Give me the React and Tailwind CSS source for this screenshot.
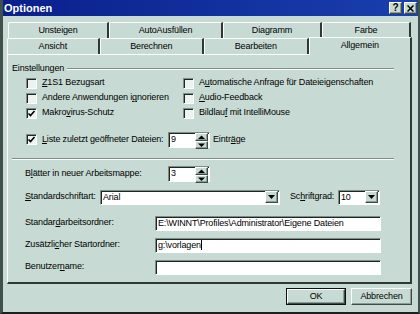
import React from 'react';

const face = 'bg-[#c8dad4]';
const raised = 'border border-t-white border-l-white border-r-[#3e4a47] border-b-[#3e4a47] shadow-[inset_-1px_-1px_0_#8a9a96]';
const sunken = 'border border-t-[#7d8d89] border-l-[#7d8d89] border-r-white border-b-white shadow-[inset_1px_1px_0_#1e2624]';

function U({ children }) {
  return <span className="underline underline-offset-1">{children}</span>;
}

function Check({ checked, children }) {
  return (
    <div className="flex items-center gap-[5px] h-[15px] whitespace-nowrap">
      <div className={`w-[11px] h-[11px] shrink-0 bg-[#eef3f1] ${sunken} flex items-center justify-center`}>
        {checked && (
          <svg width="9" height="9" viewBox="0 0 9 9">
            <path d="M1.5 4.5 L3.5 6.5 L7.5 2" stroke="#000" strokeWidth="1.6" fill="none" />
          </svg>
        )}
      </div>
      <span>{children}</span>
    </div>
  );
}

function Spin({ value }) {
  return (
    <div className={`w-[42px] h-[16px] shrink-0 bg-white ${sunken} flex items-center`}>
      <span className="flex-1 pl-[2px] leading-none">{value}</span>
      <div className="w-[13px] h-[14px] flex flex-col mr-[1px]">
        {['M1 5 L4.5 1.5 L8 5 Z', 'M1 1.5 L4.5 5 L8 1.5 Z'].map((d) => (
          <div key={d} className={`flex-1 ${face} ${raised} flex items-center justify-center`}>
            <svg width="9" height="6" viewBox="0 0 9 6"><path d={d} fill="#000" /></svg>
          </div>
        ))}
      </div>
    </div>
  );
}

function Combo({ value, w }) {
  return (
    <div className={`${w} h-[15px] shrink-0 bg-white ${sunken} flex items-center`}>
      <span className="flex-1 pl-[2px] leading-none">{value}</span>
      <div className={`w-[13px] h-[12px] mr-[1px] ${face} ${raised} flex items-center justify-center`}>
        <svg width="7" height="4" viewBox="0 0 7 4"><path d="M0 0 L7 0 L3.5 4 Z" fill="#000" /></svg>
      </div>
    </div>
  );
}

function Field({ value, cursor }) {
  return (
    <div className={`w-[226px] h-[15px] shrink-0 bg-white ${sunken} flex items-center pl-[2px]`}>
      <span className="leading-none">{value}</span>
      {cursor && <span className="w-px h-[10px] bg-black" />}
    </div>
  );
}

const row1 = [['Unsteigen', 'w-[101px]'], ['AutoAusfüllen', 'w-[114px]'], ['Diagramm', 'w-[99px]'], ['Farbe', 'w-[89px]']];
const row2 = [['Ansicht', 'w-[93px]'], ['Berechnen', 'w-[105px]'], ['Bearbeiten', 'w-[105px]']];

export default function App() {
  return (
    <div
      className={`w-[420px] h-[314px] ${face} border-l-[3px] border-l-[#40504c] border-b-[2px] border-b-[#1a2220] border-r-[2px] border-r-[#40504c] flex flex-col text-[9px] tracking-[-0.15px] text-black overflow-hidden whitespace-nowrap`}
      style={{ fontFamily: '"Liberation Sans", Arial, sans-serif' }}
    >
      <div className="h-[16px] shrink-0 bg-gradient-to-r from-[#0a1f8c] to-[#1a3fae] flex items-center justify-between pl-[1px] pr-[1px]">
        <span className="text-white font-bold text-[11px] tracking-normal">Optionen</span>
        <div className="flex gap-[2px]">
          <div className={`w-[13px] h-[12px] ${face} ${raised} flex items-center justify-center font-bold text-[10px] leading-none`}>?</div>
          <div className={`w-[13px] h-[12px] ${face} ${raised} flex items-center justify-center`}>
            <svg width="7" height="7" viewBox="0 0 7 7"><path d="M0.5 0.5 L6.5 6.5 M6.5 0.5 L0.5 6.5" stroke="#000" strokeWidth="1.5" /></svg>
          </div>
        </div>
      </div>

      <div className="flex-1 flex flex-col pl-[4px] pr-[6px] pt-[6px]">
        <div className="flex h-[16px] pl-[1px]">
          {row1.map(([t, w]) => (
            <div key={t} className={`${w} border-t border-l border-t-white border-l-white border-r-[2px] border-r-[#2e3836] rounded-tl-[2px] flex items-center justify-center`}>
              {t}
            </div>
          ))}
        </div>
        <div className="flex h-[16px] items-end">
          {row2.map(([t, w]) => (
            <div key={t} className={`${w} h-[16px] border-t border-l border-t-white border-l-white border-r-[2px] border-r-[#2e3836] rounded-tl-[2px] flex items-center justify-center`}>
              {t}
            </div>
          ))}
          <div className="w-[104px] h-[18px] -mb-[1px] relative z-10 bg-[#c8dad4] border-t border-l border-t-white border-l-white border-r-[2px] border-r-[#2e3836] flex items-start justify-center pt-[1px]">
            Allgemein
          </div>
        </div>

        <div className="h-[230px] shrink-0 border border-t-white border-l-white border-r-[2px] border-b-[2px] border-r-[#2e3836] border-b-[#2e3836] flex flex-col pl-[4px] pr-[16px] pt-[7px]">
          <div className="flex items-center gap-[3px]">
            <span>Einstellungen</span>
            <div className="flex-1 h-[2px] border-t border-t-[#7d8d89] border-b border-b-white" />
          </div>

          <div className="flex pl-[14px]">
            <div className="w-[157px] flex flex-col">
              <Check><U>Z</U>1S1 Bezugsart</Check>
              <Check>Andere Anwendungen i<U>g</U>norieren</Check>
              <Check checked>Makro<U>v</U>irus-Schutz</Check>
            </div>
            <div className="flex flex-col">
              <Check>A<U>u</U>tomatische Anfrage für Dateieigenschaften</Check>
              <Check><U>A</U>udio-Feedback</Check>
              <Check>Bildlau<U>f</U> mit IntelliMouse</Check>
            </div>
          </div>

          <div className="flex items-center pl-[14px] pt-[11px]">
            <div className="w-[142px]">
              <Check checked><U>L</U>iste zuletzt geöffneter Dateien:</Check>
            </div>
            <Spin value="9" />
            <span className="ml-[3px]">Eintr<U>ä</U>ge</span>
          </div>

          <div className="h-[2px] mt-[10px] border-t border-t-[#7d8d89] border-b border-b-white" />

          <div className="flex items-center pl-[13px] pt-[6px]">
            <span className="w-[143px]">B<U>l</U>ätter in neuer Arbeitsmappe:</span>
            <Spin value="3" />
          </div>

          <div className="flex items-center pl-[13px] pt-[8px]">
            <span className="w-[75px]"><U>S</U>tandardschriftart:</span>
            <Combo value="Arial" w="w-[180px]" />
            <span className="ml-[10px] w-[48px]">Sc<U>h</U>riftgrad:</span>
            <Combo value="10" w="w-[42px]" />
          </div>

          <div className="flex flex-col pl-[13px] pt-[11px] gap-[7px]">
            <div className="flex items-center">
              <span className="w-[130px]">Standar<U>d</U>arbeitsordner:</span>
              <Field value="E:\WINNT\Profiles\Administrator\Eigene Dateien" />
            </div>
            <div className="flex items-center">
              <span className="w-[130px]">Zusätzli<U>c</U>her Startordner:</span>
              <Field value="g:\vorlagen" cursor />
            </div>
            <div className="flex items-center">
              <span className="w-[130px]">Benutzer<U>n</U>ame:</span>
              <Field value="" />
            </div>
          </div>
        </div>

        <div className="flex justify-end gap-[5px] pt-[4px]">
          <div className="w-[60px] h-[17px] border border-[#0c1210] flex">
            <div className={`flex-1 ${raised} flex items-center justify-center`}>OK</div>
          </div>
          <div className={`w-[61px] h-[17px] ${raised} flex items-center justify-center`}>Abbrechen</div>
        </div>
      </div>
    </div>
  );
}
